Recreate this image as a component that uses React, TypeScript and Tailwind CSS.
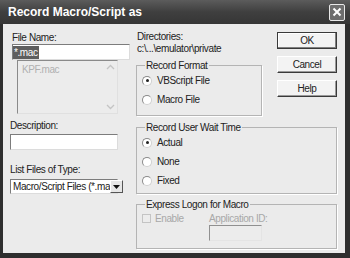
import React from 'react';

const font = { fontFamily: '"Liberation Sans", Arial, sans-serif' };

function Radio({ checked, label }: { checked?: boolean; label: string }) {
    return (
        <div className="flex h-[13px] items-center gap-[5px]">
            <span className="flex h-[10px] w-[10px] items-center justify-center rounded-full border border-t-[#8a8a8a] border-l-[#8a8a8a] border-b-[#d0d0d0] border-r-[#d0d0d0] bg-white">
                {checked && <span className="h-[3px] w-[3px] rounded-full bg-[#222]" />}
            </span>
            <span>{label}</span>
        </div>
    );
}

function Button({ label, isDefault }: { label: string; isDefault?: boolean }) {
    return (
        <button
            className={
                'h-[17px] w-[60px] bg-[#f3f3f3] leading-none text-[#222] ' +
                (isDefault
                    ? 'border border-[#3a3a3a] shadow-[inset_-1px_-1px_0_#808080,inset_1px_1px_0_#fff]'
                    : 'border border-t-[#fff] border-l-[#fff] border-b-[#3a3a3a] border-r-[#3a3a3a] shadow-[inset_-1px_-1px_0_#9a9a9a]')
            }
        >
            {label}
        </button>
    );
}

function Group({ title, children, className }: { title: string; children: React.ReactNode; className?: string }) {
    return (
        <fieldset className={'border border-[#b4b4b4] shadow-[1px_1px_0_#fff] pl-[5px] ' + (className ?? '')}>
            <legend className="ml-[3px] px-[1px] leading-[13px]">{title}</legend>
            {children}
        </fieldset>
    );
}

export default function App() {
    return (
        <div
            className="flex h-[258px] w-[350px] flex-col bg-[#2e2e2e] text-[10px] leading-[13px] tracking-[-0.4px] text-[#222]"
            style={font}
        >
            {/* title bar */}
            <div className="flex h-[24px] shrink-0 items-center justify-between bg-gradient-to-b from-[#5c5c5c] via-[#3f3f3f] to-[#363636] pl-[8px] pr-[5px]">
                <span className="text-[12px] font-bold tracking-normal text-white">Record Macro/Script as</span>
                <span className="flex h-[17px] w-[16px] items-center justify-center rounded-[2px] border border-[#e8e8e8] bg-[#6e6e6e]">
                    <svg width="10" height="10" viewBox="0 0 10 10">
                        <path d="M1.5 1.5 L8.5 8.5 M8.5 1.5 L1.5 8.5" stroke="#fff" strokeWidth="2" />
                    </svg>
                </span>
            </div>

            {/* body */}
            <div className="ml-[3px] mr-[5px] mb-[5px] flex flex-1 gap-[6px] bg-[#ebebeb] pl-[7px] pt-[7px]">
                {/* left column */}
                <div className="flex w-[120px] flex-col">
                    <span className="ml-[2px] h-[13px]">File Name:</span>
                    <div className="ml-[2px] flex h-[16px] w-[118px] items-center border border-t-[#7c7c7c] border-l-[#7c7c7c] border-b-[#dcdcdc] border-r-[#dcdcdc] bg-white">
                        <span className="bg-[#5e5e5e] px-[1px] text-white">*.mac</span>
                    </div>
                    <div className="ml-[7px] flex h-[54px] w-[101px] border border-t-[#8a8a8a] border-l-[#8a8a8a] border-b-[#e0e0e0] border-r-[#e0e0e0] bg-[#ececec]">
                        <span className="flex-1 pl-[4px] pt-[2px] text-[#b0b0b0]">KPF.mac</span>
                        <div className="flex w-[11px] flex-col justify-between py-[3px]">
                            <svg width="9" height="6" viewBox="0 0 9 6"><path d="M1 5 L4.5 1.5 L8 5" stroke="#c4c4c4" strokeWidth="1.3" fill="none" /></svg>
                            <svg width="9" height="6" viewBox="0 0 9 6"><path d="M1 1 L4.5 4.5 L8 1" stroke="#c4c4c4" strokeWidth="1.3" fill="none" /></svg>
                        </div>
                    </div>
                    <span className="mt-[5px] h-[13px]">Description:</span>
                    <div className="mt-[2px] h-[16px] w-[108px] border border-t-[#7c7c7c] border-l-[#7c7c7c] border-b-[#dcdcdc] border-r-[#dcdcdc] bg-white" />
                    <span className="mt-[13px] h-[13px]">List Files of Type:</span>
                    <div className="mt-[3px] flex h-[15px] w-[108px] items-center border border-t-[#7c7c7c] border-l-[#7c7c7c] border-b-[#dcdcdc] border-r-[#dcdcdc] bg-white">
                        <span className="flex-1 whitespace-nowrap pl-[2px]">Macro/Script Files (*.ma</span>
                        <span className="flex h-[13px] w-[13px] shrink-0 items-center justify-center border border-t-[#fff] border-l-[#fff] border-b-[#555] border-r-[#555] bg-[#e6e6e6]">
                            <svg width="7" height="4" viewBox="0 0 7 4"><path d="M0 0 H7 L3.5 4 Z" fill="#111" /></svg>
                        </span>
                    </div>
                </div>

                {/* right part */}
                <div className="flex w-[201px] flex-col">
                    <div className="flex gap-[15px]">
                        <div className="flex w-[126px] flex-col">
                            <span className="ml-[1px] leading-[12px]">Directories:</span>
                            <span className="ml-[1px] leading-[12px]">c:\...\emulator\private</span>
                            <Group title="Record Format" className="mt-[4px] h-[57px]">
                                <div className="flex flex-col gap-[6px] pt-[2px]">
                                    <Radio checked label="VBScript File" />
                                    <Radio label="Macro File" />
                                </div>
                            </Group>
                        </div>
                        <div className="mt-[1px] flex flex-col gap-[7px]">
                            <Button label="OK" isDefault />
                            <Button label="Cancel" />
                            <Button label="Help" />
                        </div>
                    </div>
                    <Group title="Record User Wait Time" className="mt-[5px] h-[73px]">
                        <div className="flex flex-col gap-[6px] pt-[2px]">
                            <Radio checked label="Actual" />
                            <Radio label="None" />
                            <Radio label="Fixed" />
                        </div>
                    </Group>
                    <Group title="Express Logon for Macro" className="mt-[4px] h-[51px]">
                        <div className="flex pt-[1px] text-[#a8a8a8]">
                            <div className="flex h-[13px] w-[67px] items-center gap-[4px]">
                                <span className="h-[9px] w-[9px] border border-[#c4c4c4] bg-[#ececec]" />
                                <span>Enable</span>
                            </div>
                            <div className="flex flex-col">
                                <span>Application ID:</span>
                                <div className="h-[16px] w-[53px] border border-t-[#909090] border-l-[#909090] border-b-[#e4e4e4] border-r-[#e4e4e4] bg-[#ececec]" />
                            </div>
                        </div>
                    </Group>
                </div>
            </div>
        </div>
    );
}
